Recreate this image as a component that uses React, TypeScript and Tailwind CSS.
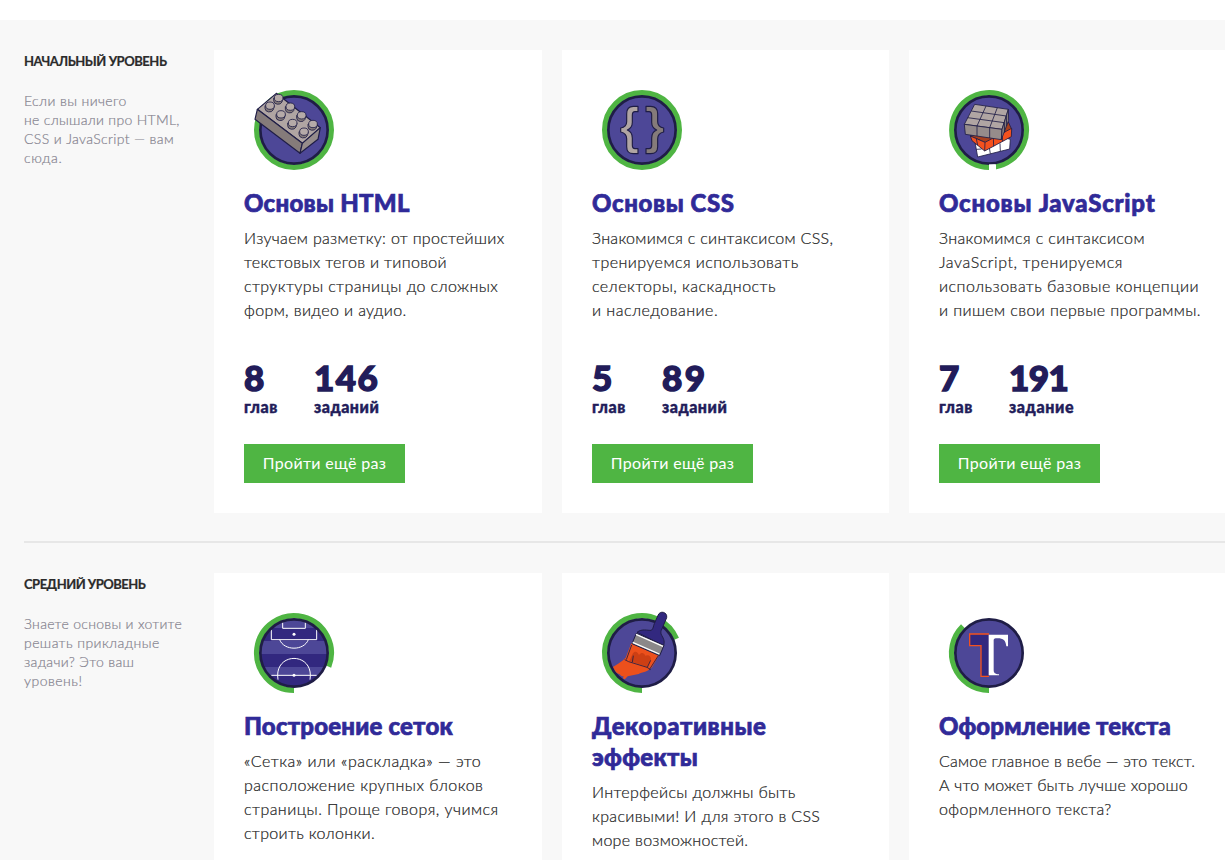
import type { ReactNode } from "react";

type Line = [text: string, tracking: string];

type Course = {
  icon: ReactNode;
  title: Line[];
  text: Line[];
  stats?: [Line, Line][];
};

type Level = { name: Line; about: Line[]; courses: Course[] };

const INK = "#1f1d46";

function Badge({ arc, clip, children }: { arc?: string; clip?: string; children: ReactNode }) {
  const rim = <circle cx="150" cy="150" r="101" fill="none" stroke={INK} strokeWidth="8" />;
  return (
    <svg viewBox="0 0 300 300" className="block size-[100px]">
      {arc ? (
        <path d={arc} fill="none" stroke="#4fb543" strokeWidth="17" />
      ) : (
        <circle cx="150" cy="150" r="111.5" fill="none" stroke="#4fb543" strokeWidth="17" />
      )}
      <circle cx="150" cy="150" r="101" fill="#4d4797" />
      {clip && (
        <clipPath id={clip}>
          <circle cx="150" cy="150" r="99" />
        </clipPath>
      )}
      {!clip && rim}
      {children}
      {clip && rim}
    </svg>
  );
}

const studs = [
  [102, 54], [76, 77], [137, 80], [109, 103], [171, 106], [144, 129], [205, 132], [178, 155],
];

function BrickIcon() {
  return (
    <Badge>
      <g stroke={INK} strokeWidth="3.5" strokeLinejoin="round">
        <path d="M97 40L229 143L175 190L40 88Z" fill="#b0a5a3" />
        <path d="M40 88L33 118L168 220L175 190Z" fill="#857b7a" />
        <path d="M175 190L229 143L222 178L168 220Z" fill="#968c8b" />
        {studs.map(([x, y]) => (
          <g key={`${x}-${y}`} strokeWidth="2.5">
            <path d={`M${x - 13} ${y}v8a13 11 0 0 0 25 4l3 -12Z`} fill="#857b7a" />
            <ellipse cx={x + 2} cy={y} rx="13" ry="11" fill="#b5aaa8" />
          </g>
        ))}
      </g>
    </Badge>
  );
}

function BracesIcon() {
  return (
    <Badge>
      <g stroke={INK} strokeWidth="3.5" strokeLinejoin="round">
        <path
          d="M138 79H124Q104 79 104 101V125Q104 140 86 144V156Q104 160 104 176V200Q104 221 124 221H138V206H129Q121 206 121 196V174Q121 156 106 150Q121 144 121 127V105Q121 95 129 95H138Z"
          fill="#b0a5a3"
        />
        <path
          d="M162 79H176Q197 79 197 101V125Q197 140 215 144V156Q197 160 197 176V200Q197 221 176 221H162V206H171Q179 206 179 196V174Q179 156 194 150Q179 144 179 127V105Q179 95 171 95H162Z"
          fill="#857b7a"
        />
      </g>
    </Badge>
  );
}

function CubeIcon() {
  return (
    <Badge arc="M150 261.5A111.5 111.5 0 1 1 168.5 260">
      <rect x="150" y="253" width="21" height="18" fill="#fff" />
      <g stroke={INK} strokeWidth="2.5" strokeLinejoin="round">
        <path d="M95 165L108 186L116 231L212 207L214 178L150 160Z" fill="#fff" />
        <path d="M112 208L128 207M151 203L154 221M183 190L184 214" fill="none" />
        <path d="M94 168L140 188L218 148L208 126L150 150Z" fill="#a8401f" />
        <path d="M94 168L99 182L137 213L217 170L218 145L138 187Z" fill="#f4511e" />
        <path d="M138 187L137 213M163 174L164 199M190 160L191 184M112 176L116 196" fill="none" />
        <path d="M107 73L208 88L189 148L76 133Z" fill="#b0a5a3" />
        <path d="M76 133L189 148L187 179L79 163Z" fill="#968c8b" />
        <path d="M208 88L209 121L187 179L189 148Z" fill="#857b7a" />
        <path
          d="M141 78L114 138V168M175 83L152 143V174M97 93L202 108L203 138M86 113L196 128L197 158"
          fill="none"
        />
      </g>
    </Badge>
  );
}

function FieldIcon() {
  return (
    <Badge arc="M150 261.5A111.5 111.5 0 1 1 253.6 191" clip="field">
      <g clipPath="url(#field)">
        <path d="M40 75H260V114H40ZM40 153H260V192H40ZM40 217H260V260H40Z" fill="#32287f" />
        <g fill="none" stroke="#fff" strokeWidth="3">
          <path d="M116 58V76H184V58M82 80V110H218V80M107 110C120 144 180 144 193 110M82 217H218" />
          <path d="M102 230C88 145 212 145 198 230" />
        </g>
        <circle cx="150" cy="94" r="4.5" fill="#fff" />
        <circle cx="150" cy="217" r="4.5" fill="#fff" />
      </g>
    </Badge>
  );
}

function BrushIcon() {
  return (
    <Badge arc="M150 261.5A111.5 111.5 0 1 1 253 107.5">
      <clipPath id="brush">
        <circle cx="150" cy="150" r="97" />
      </clipPath>
      <path
        clipPath="url(#brush)"
        d="M40 202C65 192 85 180 101 164L118 121L201 157L180 193C168 207 150 208 140 213L107 220L100 227C94 230 90 222 97 220C84 222 90 214 72 210L40 206Z"
        fill="#ec501c"
      />
      <path
        d="M112 174L122 152C129 142 137 146 141 156C149 146 156 150 160 158C168 154 178 158 177 170L166 192Z"
        fill="#cd3f14"
      />
      <path
        d="M119 126L103 170M124 158L121 178M98 170L110 176L165 193L176 200M176 172L166 193M199 158L172 200"
        fill="none"
        stroke={INK}
        strokeWidth="2.5"
      />
      <path
        d="M135 88C150 76 166 83 178 82C185 76 184 68 187 62L198 37C204 21 227 27 224 44L213 70C209 82 205 82 207 93C214 106 219 112 215 128Z"
        fill="#32287f"
        stroke={INK}
        strokeWidth="3"
      />
      <path d="M133 91L216 127L203 158L120 122Z" fill="#8b8889" stroke={INK} strokeWidth="3" />
      <path d="M132 94L213 130M122 118L202 153" stroke="#fff" strokeWidth="4" />
    </Badge>
  );
}

function TypeIcon() {
  return (
    <Badge arc="M150 261.5A111.5 111.5 0 0 1 72 70">
      <path d="M150 93H92V128H126V220H150" fill="#32287f" stroke="#f4511e" strokeWidth="4" />
      <path
        d="M149 95H207V130H202C200 112 193 106 176 106C166 106 164 107 164 114V201C164 210 168 213 180 214V217H149Z"
        fill="#fff"
      />
    </Badge>
  );
}

const levels: Level[] = [
  {
    name: ["НАЧАЛЬНЫЙ УРОВЕНЬ", "tracking-[-0.45px]"],
    about: [
      ["Если вы ничего", "tracking-[0.38px]"],
      ["не слышали про HTML,", "tracking-[0.3px]"],
      ["CSS и JavaScript — вам", "tracking-[0.36px]"],
      ["сюда.", "tracking-[0.6px]"],
    ],
    courses: [
      {
        icon: <BrickIcon />,
        title: [["Основы HTML", "tracking-[0.27px]"]],
        text: [
          ["Изучаем разметку: от простейших", "tracking-[0.32px]"],
          ["текстовых тегов и типовой", "tracking-[0.32px]"],
          ["структуры страницы до сложных", "tracking-[0.4px]"],
          ["форм, видео и аудио.", "tracking-[0.38px]"],
        ],
        stats: [
          [["8", "tracking-[1px]"], ["глав", "tracking-[0.5px]"]],
          [["146", "tracking-[1.5px]"], ["заданий", "tracking-[0.5px]"]],
        ],
      },
      {
        icon: <BracesIcon />,
        title: [["Основы CSS", "tracking-[0.6px]"]],
        text: [
          ["Знакомимся с синтаксисом CSS,", "tracking-[0.29px]"],
          ["тренируемся использовать", "tracking-[0.44px]"],
          ["селекторы, каскадность", "tracking-[0.44px]"],
          ["и наследование.", "tracking-[0.48px]"],
        ],
        stats: [
          [["5", "tracking-[1px]"], ["глав", "tracking-[0.5px]"]],
          [["89", "tracking-[2.5px]"], ["заданий", "tracking-[0.5px]"]],
        ],
      },
      {
        icon: <CubeIcon />,
        title: [["Основы JavaScript", "tracking-[0.76px]"]],
        text: [
          ["Знакомимся с синтаксисом", "tracking-[0.37px]"],
          ["JavaScript, тренируемся", "tracking-[0.58px]"],
          ["использовать базовые концепции", "tracking-[0.47px]"],
          ["и пишем свои первые программы.", "tracking-[0.39px]"],
        ],
        stats: [
          [["7", "tracking-[1px]"], ["глав", "tracking-[0.5px]"]],
          [["191", "tracking-[-0.5px]"], ["задание", "tracking-[0.6px]"]],
        ],
      },
    ],
  },
  {
    name: ["СРЕДНИЙ УРОВЕНЬ", "tracking-[-0.5px]"],
    about: [
      ["Знаете основы и хотите", "tracking-[0.29px]"],
      ["решать прикладные", "tracking-[0.42px]"],
      ["задачи? Это ваш", "tracking-[0.3px]"],
      ["уровень!", "tracking-[0.48px]"],
    ],
    courses: [
      {
        icon: <FieldIcon />,
        title: [["Построение сеток", "tracking-[0.2px]"]],
        text: [
          ["«Сетка» или «раскладка» — это", "tracking-[0.51px]"],
          ["расположение крупных блоков", "tracking-[0.48px]"],
          ["страницы. Проще говоря, учимся", "tracking-[0.45px]"],
          ["строить колонки.", "tracking-[0.33px]"],
        ],
      },
      {
        icon: <BrushIcon />,
        title: [
          ["Декоративные", "tracking-[0.58px]"],
          ["эффекты", "tracking-[0.3px]"],
        ],
        text: [
          ["Интерфейсы должны быть", "tracking-[0.34px]"],
          ["красивыми! И для этого в CSS", "tracking-[0.35px]"],
          ["море возможностей.", "tracking-[0.3px]"],
        ],
      },
      {
        icon: <TypeIcon />,
        title: [["Оформление текста", "tracking-[0.12px]"]],
        text: [
          ["Самое главное в вебе — это текст.", "tracking-[0.22px]"],
          ["А что может быть лучше хорошо", "tracking-[0.23px]"],
          ["оформленного текста?", "tracking-[0.39px]"],
        ],
      },
    ],
  },
];

function Lines({ lines }: { lines: Line[] }) {
  return (
    <>
      {lines.map(([text, tracking]) => (
        <span key={text} className={`block whitespace-nowrap ${tracking}`}>
          {text}
        </span>
      ))}
    </>
  );
}

const heavy = "font-['Lato',sans-serif] font-black";
const light = "font-['Lato',sans-serif] font-light [-webkit-text-stroke:0.2px]";

function Card({ course }: { course: Course }) {
  return (
    <article className="h-[463px] w-[327px] shrink-0 bg-white p-[30px] first:w-[328px] last:w-[328px]">
      {course.icon}
      <h2
        className={`mt-[7px] text-[24px] leading-[31px] text-[#302a98] [-webkit-text-stroke:0.7px] ${heavy}`}
      >
        <Lines lines={course.title} />
      </h2>
      <p className={`mt-[8px] text-[16px] leading-6 text-[#222] ${light}`}>
        <Lines lines={course.text} />
      </p>
      {course.stats && (
        <>
          <div className="mt-[36px] flex text-[#221c5a]">
            {course.stats.map(([value, label]) => (
              <div key={value[0]} className={`w-[70px] ${heavy}`}>
                <div className="text-[35px] leading-[39px] [-webkit-text-stroke:1.4px]">
                  <Lines lines={[value]} />
                </div>
                <div className="mt-[1px] text-[16px] leading-[18px] [-webkit-text-stroke:0.4px]">
                  <Lines lines={[label]} />
                </div>
              </div>
            ))}
          </div>
          <button className="mt-[28px] flex h-[39px] w-[161px] items-center justify-center bg-[#4fb543] pb-[1px] text-[16px] tracking-[0.3px] whitespace-nowrap text-white">
            Пройти ещё раз
          </button>
        </>
      )}
    </article>
  );
}

export default function App() {
  return (
    <div className="h-[860px] overflow-hidden bg-white pt-5 font-['Lato',sans-serif]">
      <main className="h-[1060px] bg-[#f8f8f8] pl-6">
        {levels.map((level, i) => (
          <section
            key={level.name[0]}
            className={`flex ${i ? "border-t-2 border-[#e7e7e7] pt-[30px]" : "pt-[30px] pb-[28px]"}`}
          >
            <aside className="w-[190px] shrink-0">
              <h3 className="mt-[2px] text-[13px] leading-[18px] font-bold text-[#2b2b2b] [-webkit-text-stroke:0.2px]">
                <Lines lines={[level.name]} />
              </h3>
              <p className={`mt-[21px] text-[14px] leading-[19px] text-[#85838f] ${light}`}>
                <Lines lines={level.about} />
              </p>
            </aside>
            <div className="flex shrink-0 gap-5">
              {level.courses.map((course) => (
                <Card key={course.title[0][0]} course={course} />
              ))}
            </div>
          </section>
        ))}
      </main>
    </div>
  );
}
